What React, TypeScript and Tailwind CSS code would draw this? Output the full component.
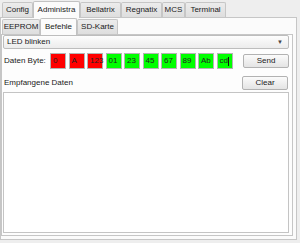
import React from 'react';

const outerTabs = [
  { label: 'Config', w: 'w-[31px]' },
  { label: 'Administra', w: 'w-[47px]', active: true },
  { label: 'Bellatrix', w: 'w-[41px]' },
  { label: 'Regnatix', w: 'w-[41px]' },
  { label: 'MCS', w: 'w-[23px]' },
  { label: 'Terminal', w: 'w-[41px]' },
];

const innerTabs = [
  { label: 'EEPROM', w: 'w-[38px]' },
  { label: 'Befehle', w: 'w-[37px]', active: true },
  { label: 'SD-Karte', w: 'w-[41px]' },
];

const bytes = [
  { v: '0', red: true },
  { v: 'A', red: true },
  { v: '123', red: true },
  { v: '01' },
  { v: '23' },
  { v: '45' },
  { v: '67' },
  { v: '89' },
  { v: 'Ab' },
  { v: 'cd', cursor: true },
];

const Tab: React.FC<{ label: string; w: string; active?: boolean }> = ({ label, w, active }) => (
  <div
    className={
      active
        ? `${w} h-[17px] -mb-px z-10 border border-b-0 border-[#c2c2c2] rounded-t-[2px] bg-[#fbfbfb] flex items-center justify-center`
        : `${w} h-[15px] border border-b-0 border-[#c6c6c6] rounded-t-[2px] bg-gradient-to-b from-[#ececec] to-[#dedede] flex items-center justify-center`
    }
  >
    {label}
  </div>
);

const Button: React.FC<{ label: string; className?: string }> = ({ label, className }) => (
  <div
    className={`w-[46px] h-[14px] border border-[#b2b2b2] rounded-[2px] bg-gradient-to-b from-[#fbfbfb] to-[#e4e4e4] flex items-center justify-center ${className ?? ''}`}
  >
    {label}
  </div>
);

export default function App() {
  return (
    <div className="w-[300px] h-[243px] bg-[#eeeeee] text-[8px] leading-none text-[#1a1a1a] font-['Liberation_Sans',Arial,sans-serif]">
      {/* top tabs */}
      <div className="h-[17px] flex items-end pl-[2px] pt-px">
        {outerTabs.map((t) => (
          <Tab key={t.label} {...t} />
        ))}
      </div>

      {/* outer panel */}
      <div className="w-[297px] h-[223px] border border-[#c6c6c6] bg-[#fbfbfb] pt-[2px]">
        <div className="h-[14px] flex items-end pl-[1px]">
          {innerTabs.map((t) => (
            <Tab key={t.label} {...t} />
          ))}
        </div>

        {/* inner panel */}
        <div className="w-[292px] h-[202px] border border-[#c6c6c6] bg-[#fdfdfd] flex flex-col">
          {/* combo */}
          <div className="ml-[1px] w-[286px] h-[14px] border border-[#bdbdbd] rounded-[2px] bg-gradient-to-b from-[#fdfdfd] to-[#ececec] flex items-center pl-[3px] pr-[5px]">
            <span>LED blinken</span>
            <span className="ml-auto text-[6px] text-[#444]">▼</span>
          </div>

          {/* data bytes */}
          <div className="mt-[4px] h-[16px] flex items-center">
            <span className="ml-[2px] w-[46px]">Daten Byte:</span>
            <div className="flex gap-[2.5px]">
              {bytes.map((b) => (
                <div
                  key={b.v}
                  className={`w-[16px] h-[16px] border border-[#b4b4b4] flex items-center pl-[2px] text-[#222] ${
                    b.red ? 'bg-[#ff0000]' : 'bg-[#00ff00]'
                  }`}
                >
                  {b.v}
                  {b.cursor && <span className="w-px h-[9px] bg-[#111]" />}
                </div>
              ))}
            </div>
            <Button label="Send" className="ml-auto mr-[3px]" />
          </div>

          {/* received */}
          <div className="mt-[6px] h-[15px] flex items-center">
            <span className="ml-[2px]">Empfangene Daten</span>
            <Button label="Clear" className="ml-auto mr-[4px]" />
          </div>

          <div className="mt-[2px] ml-[1px] w-[286px] h-[141px] border border-[#c4c4c4] bg-white" />
        </div>
      </div>
    </div>
  );
}
